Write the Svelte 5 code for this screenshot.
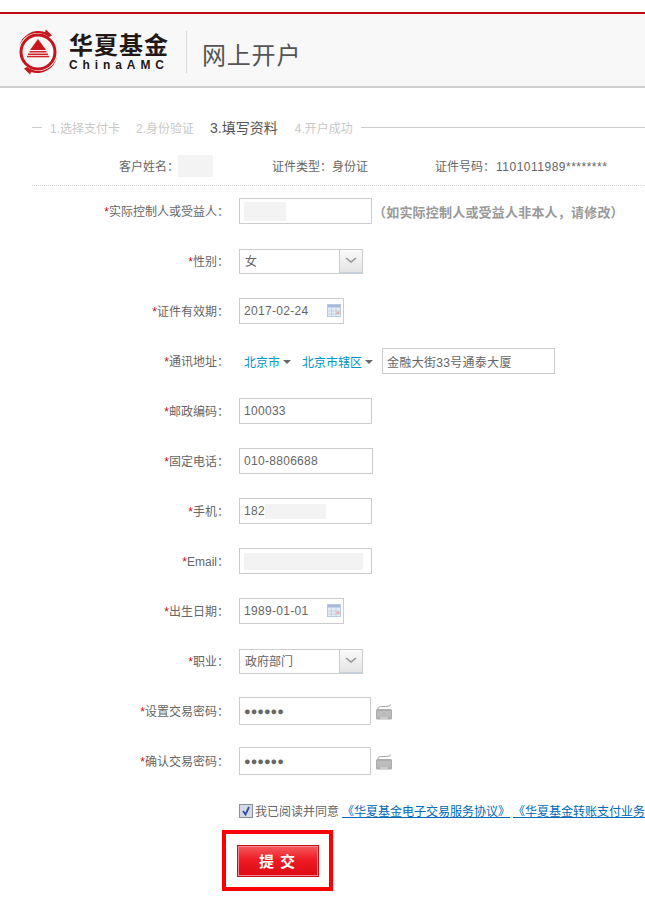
<script>
  const simpleRows = {
    postcode: "100033",
    phone: "010-8806688",
  };
</script>

<div class="page">
  <header class="top">
    <div class="logo">
      <svg width="46" height="46" viewBox="0 0 46 46">
        <circle cx="23" cy="23" r="17" fill="none" stroke="#c4161c" stroke-width="3" />
        <path d="M4 18A20 20 0 0 1 30 3L31 0.500 37 6.500 34 8A19 19 0 0 0 4 18z" fill="#c4161c" />
        <path d="M4 18A20 20 0 0 1 30 3L31 0.500 37 6.500 34 8A19 19 0 0 0 4 18z" fill="#c4161c" transform="rotate(180 23 23)" />
        <path d="M23 10l8 11h-16z" fill="#c8171d" />
        <rect x="14.500" y="22" width="17" height="1.500" fill="#d3242a" />
        <rect x="13" y="24.500" width="20" height="1.500" fill="#d3242a" />
        <rect x="12" y="26.800" width="22" height="1.500" fill="#d3242a" />
      </svg>
      <div class="brand">
        <div class="brand-cn">华夏基金</div>
        <div class="brand-en">ChinaAMC</div>
      </div>
    </div>
    <div class="sep"></div>
    <div class="title">网上开户</div>
  </header>

  <div class="steps">
    <span class="dash"></span>
    <span class="step">1.选择支付卡</span>
    <span class="step">2.身份验证</span>
    <span class="step on">3.填写资料</span>
    <span class="step">4.开户成功</span>
    <span class="rule"></span>
  </div>

  <div class="info">
    <div class="info-name">客户姓名&#65306;<span class="blank"></span></div>
    <div class="info-type">证件类型&#65306;身份证</div>
    <div class="info-no">证件号码&#65306;<span class="num">1101011989********</span></div>
  </div>

  <form class="form">
    <div class="row">
      <label><em>*</em>实际控制人或受益人&#65306;</label>
      <div class="input w133"><span class="mask m1"></span></div>
      <span class="hint">&#65288;如实际控制人或受益人非本人&#65292;请修改&#65289;</span>
    </div>
    <div class="row">
      <label><em>*</em>性别&#65306;</label>
      <div class="select"><span>女</span><i class="arrow"><svg width="12" height="7" viewBox="0 0 12 7"><path d="M1 1l5 4 5-4" fill="none" stroke="#8f969c" stroke-width="1.600" /></svg></i></div>
    </div>
    <div class="row">
      <label><em>*</em>证件有效期&#65306;</label>
      <div class="input date">2017-02-24{@render cal()}</div>
    </div>
    <div class="row">
      <label><em>*</em>通讯地址&#65306;</label>
      <div class="addr">
        <a class="city">北京市</a><i class="caret"></i>
        <a class="city d2">北京市辖区</a><i class="caret"></i>
        <div class="input street">金融大街33号通泰大厦</div>
      </div>
    </div>
    <div class="row">
      <label><em>*</em>邮政编码&#65306;</label>
      <div class="input w133">{simpleRows.postcode}</div>
    </div>
    <div class="row">
      <label><em>*</em>固定电话&#65306;</label>
      <div class="input w134">{simpleRows.phone}</div>
    </div>
    <div class="row">
      <label><em>*</em>手机&#65306;</label>
      <div class="input w133">182<span class="mask m2"></span></div>
    </div>
    <div class="row">
      <label><em>*</em>Email&#65306;</label>
      <div class="input w133"><span class="mask m3"></span></div>
    </div>
    <div class="row">
      <label><em>*</em>出生日期&#65306;</label>
      <div class="input date">1989-01-01{@render cal()}</div>
    </div>
    <div class="row">
      <label><em>*</em>职业&#65306;</label>
      <div class="select"><span>政府部门</span><i class="arrow"><svg width="12" height="7" viewBox="0 0 12 7"><path d="M1 1l5 4 5-4" fill="none" stroke="#8f969c" stroke-width="1.600" /></svg></i></div>
    </div>
    <div class="row">
      <label><em>*</em>设置交易密码&#65306;</label>
      <div class="input pwd">●●●●●●</div>
      {@render keyboard()}
    </div>
    <div class="row">
      <label><em>*</em>确认交易密码&#65306;</label>
      <div class="input pwd">●●●●●●</div>
      {@render keyboard()}
    </div>

    <div class="agree">
      <span class="check"><svg width="12" height="12" viewBox="0 0 12 12"><rect width="12" height="12" fill="#d5d9e6" /><path d="M3 6l2.500 3.500 3.500-7.500" fill="none" stroke="#2d4f9e" stroke-width="1.800" /></svg></span>
      <span class="agree-text">我已阅读并同意</span>
      <a>《华夏基金电子交易服务协议》</a>
      <a>《华夏基金转账支付业务协议》</a>
    </div>

    <div class="submit-box">
      <button type="button" class="submit">提 交</button>
    </div>
  </form>
</div>

{#snippet cal()}
  <svg class="cal" width="14" height="13" viewBox="0 0 14 13">
    <rect x="0.500" y="0.500" width="13" height="12" fill="#e6ecf6" stroke="#bccae0" />
    <rect x="1" y="1" width="12" height="2.500" fill="#a5b9da" />
    <path d="M4.500 4v8M9 4v8M1 7h12M1 10h12" stroke="#c5d1e4" />
    <rect x="9.500" y="7.500" width="3" height="2.500" fill="#eeb0a0" />
  </svg>
{/snippet}

{#snippet keyboard()}
  <svg class="kbd" width="17" height="16" viewBox="0 0 17 16">
    <path d="M3 5c0-2 1-2.500 5-2.500 4 0 6.500 0 8-2" fill="none" stroke="#888" stroke-width="0.800" />
    <rect x="1" y="5" width="16" height="10.500" rx="1.500" fill="#adadad" />
    <path d="M2.500 8h13M2.500 10h13M2.500 12h13" stroke="#ececec" stroke-dasharray="1 1" />
    <path d="M5 14h8" stroke="#ececec" />
  </svg>
{/snippet}

<style>
  :global(body) {
    margin: 0;
    background: #fff;
  }

  .page {
    width: 645px;
    height: 900px;
    overflow: hidden;
    font-family: "Liberation Sans", "Noto Sans CJK SC", sans-serif;
    font-size: 12px;
    color: #666;
  }

  .top {
    margin-top: 12px;
    height: 72px;
    display: flex;
    align-items: center;
    background: #f8f8f8;
    border-top: 2px solid #c00d14;
    border-bottom: 2px solid #cfcfcf;
    padding-left: 15px;
  }

  .logo {
    display: flex;
    align-items: center;
    margin-top: 4px;
  }

  .brand {
    margin-left: 8px;
    width: 100px;
    color: #231815;
    font-weight: 700;
  }

  .brand-cn {
    font-size: 24px;
    line-height: 24px;
    letter-spacing: 1px;
    white-space: nowrap;
  }

  .brand-en {
    font-size: 12px;
    line-height: 12px;
    margin-top: 1px;
    letter-spacing: 4.900px;
    white-space: nowrap;
  }

  .sep {
    width: 1px;
    height: 42px;
    margin: 4px 0 0 17px;
    background: #d8d8d8;
  }

  .title {
    margin: 6px 0 0 15px;
    font-size: 24px;
    letter-spacing: 0.800px;
    color: #555;
    white-space: nowrap;
  }

  .steps {
    box-sizing: border-box;
    height: 40px;
    margin-top: 20px;
    padding: 0 0 2px 32px;
    display: flex;
    align-items: center;
    color: #c8c8c8;
    white-space: nowrap;
  }

  .dash {
    width: 10px;
    height: 1px;
    background: #ccc;
    margin-right: 8px;
  }

  .step {
    margin-right: 16px;
  }

  .step.on {
    font-size: 14px;
    margin-right: 17px;
    color: #555;
  }

  .rule {
    flex: 1;
    height: 1px;
    margin-left: -8px;
    background: #ccc;
  }

  .info {
    box-sizing: border-box;
    height: 38px;
    padding-bottom: 2px;
    display: flex;
    align-items: center;
    margin: 0 0 0 32px;
    border-bottom: 1px dotted #d8d8d8;
    white-space: nowrap;
  }

  .info-name {
    margin-left: 87px;
    width: 153px;
    display: flex;
    align-items: center;
  }

  .blank {
    width: 35px;
    height: 22px;
    background: #f3f3f3;
    margin-left: -1px;
  }

  .info-type {
    width: 163px;
  }

  .num {
    letter-spacing: 0.500px;
    margin-left: 1px;
  }

  .row {
    height: 50px;
    display: flex;
    align-items: center;
    white-space: nowrap;
  }

  label {
    box-sizing: border-box;
    width: 229px;
    margin-right: 10px;
    padding-bottom: 2px;
    text-align: right;
  }

  em {
    color: #c00d14;
    font-style: normal;
  }

  .input {
    box-sizing: border-box;
    height: 26px;
    padding-left: 4px;
    display: flex;
    align-items: center;
    border: 1px solid #ccc;
    letter-spacing: 0.300px;
    background: #fff;
  }

  .w133 {
    width: 133px;
  }

  .w134 {
    width: 134px;
  }

  .mask {
    height: 18px;
    background: #f3f3f3;
  }

  .m1 {
    width: 42px;
    height: 19px;
  }

  .m2 {
    width: 61px;
    height: 15px;
  }

  .m3 {
    width: 119px;
    height: 17px;
  }

  .hint {
    margin-left: 1px;
    font-size: 13px;
    font-weight: 700;
    letter-spacing: 0.200px;
    color: #999;
  }

  .select {
    box-sizing: border-box;
    width: 124px;
    height: 25px;
    padding-left: 5px;
    display: flex;
    align-items: center;
    justify-content: space-between;
    border: 1px solid #ccc;
  }

  .select span {
    padding-bottom: 2px;
  }

  .arrow {
    box-sizing: border-box;
    width: 23px;
    height: 23px;
    display: flex;
    align-items: center;
    justify-content: center;
    border-left: 1px solid #ccc;
    border-bottom: 1px solid #c3d2e0;
    background: linear-gradient(#fafafa, #e4e4e4);
  }

  .date {
    width: 105px;
    position: relative;
  }

  .cal {
    position: absolute;
    right: 2px;
    top: 5px;
  }

  .addr {
    display: flex;
    align-items: center;
  }

  .city {
    margin-left: 5px;
    color: #0095c8;
  }

  .d2 {
    margin-left: 11px;
  }

  .caret {
    width: 0;
    height: 0;
    margin: 1px 0 0 3px;
    border: 4px solid transparent;
    border-top-color: #666;
    border-bottom: 0;
  }

  .street {
    width: 173px;
    margin-left: 9px;
  }

  .pwd {
    width: 132px;
    height: 28px;
    font-size: 11px;
    letter-spacing: 0;
    color: #666;
  }

  .kbd {
    margin-left: 4px;
    margin-top: 2px;
  }

  .agree {
    height: 44px;
    padding-top: 5px;
    padding-left: 239px;
    box-sizing: border-box;
    display: flex;
    align-items: center;
    white-space: nowrap;
  }

  .check {
    box-sizing: border-box;
    width: 14px;
    height: 14px;
    border: 1px solid #8d9097;
    display: flex;
  }

  .agree-text {
    margin: 0 3px 0 2px;
  }

  .agree a {
    color: #0068b7;
    text-decoration: underline;
    margin-right: 3px;
  }

  .submit-box {
    box-sizing: border-box;
    width: 111px;
    height: 61px;
    margin-left: 222px;
    display: flex;
    align-items: center;
    justify-content: center;
    border: 4px solid #f00;
  }

  .submit {
    box-sizing: border-box;
    width: 82px;
    height: 32px;
    padding: 0;
    border: 1px solid #c8101a;
    outline: 1px solid #f28a8e;
    outline-offset: -2px;
    background: linear-gradient(#f65a60, #ee1c25 45%, #dd0a12);
    color: #fff;
    font-family: inherit;
    font-size: 15px;
    font-weight: 700;
    letter-spacing: 1px;
  }
</style>
